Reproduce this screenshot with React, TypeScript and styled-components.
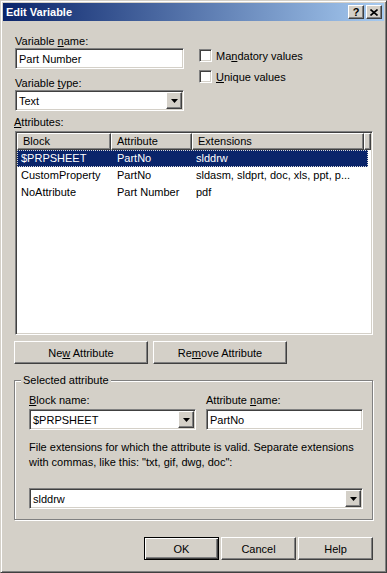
import React from 'react';
import styled, { createGlobalStyle, css } from 'styled-components';

const GlobalStyle = createGlobalStyle`
  html, body {
    margin: 0;
    padding: 0;
    background: #d4d0c8;
  }
  body {
    font-family: "Liberation Sans", Arial, sans-serif;
    font-size: 11px;
    color: #000;
  }
`;

// bevels used by the classic controls
const raised = css`
  background: #d4d0c8;
  border: 1px solid;
  border-color: #fff #404040 #404040 #fff;
  box-shadow: inset -1px -1px 0 #808080;
`;

const sunken = css`
  background: #fff;
  border: 1px solid;
  border-color: #808080 #fff #fff #808080;
  box-shadow: inset 1px 1px 0 #404040, inset -1px -1px 0 #d4d0c8;
`;

const Window = styled.div`
  width: 387px;
  height: 573px;
  box-sizing: border-box;
  background: #d4d0c8;
  border: 1px solid;
  border-color: #d4d0c8 #404040 #404040 #d4d0c8;
  box-shadow: inset 1px 1px 0 #fff, inset -1px -1px 0 #808080;
  padding: 2px;
  display: flex;
  flex-direction: column;
`;

const TitleBar = styled.div`
  height: 18px;
  display: flex;
  align-items: center;
  justify-content: space-between;
  padding: 0 2px 0 2px;
  background: linear-gradient(to right, #0a246a, #a6caf0);
`;

const TitleText = styled.span`
  color: #fff;
  font-weight: bold;
  font-size: 11px;
  padding-left: 1px;
`;

const CaptionButtons = styled.div`
  display: flex;
  gap: 2px;
`;

const CaptionButton = styled.div`
  ${raised};
  width: 16px;
  height: 14px;
  box-sizing: border-box;
  display: flex;
  align-items: center;
  justify-content: center;
  font-weight: bold;
  font-size: 11px;
  line-height: 1;
`;

const Body = styled.div`
  flex: 1;
  display: flex;
  flex-direction: column;
  padding: 14px 11px 0;
`;

const TopRow = styled.div`
  display: flex;
`;

const FieldColumn = styled.div`
  width: 169px;
  padding-left: 1px;
  display: flex;
  flex-direction: column;
`;

const OptionColumn = styled.div`
  margin-left: 15px;
  padding-top: 14px;
  display: flex;
  flex-direction: column;
  gap: 8px;
`;

const Label = styled.div<{ $mt?: number; $mb?: number }>`
  height: 13px;
  line-height: 13px;
  white-space: nowrap;
  margin-top: ${(p) => p.$mt ?? 0}px;
  margin-bottom: ${(p) => p.$mb ?? 0}px;
`;

const TextBox = styled.div`
  ${sunken};
  height: 21px;
  box-sizing: border-box;
  display: flex;
  align-items: center;
  padding: 0 3px;
  white-space: nowrap;
`;

const ComboBox = styled.div`
  ${sunken};
  height: 21px;
  box-sizing: border-box;
  padding: 1px;
  display: flex;
  align-items: stretch;
`;

const ComboText = styled.span`
  flex: 1;
  display: flex;
  align-items: center;
  padding-left: 2px;
  white-space: nowrap;
`;

const DropButton = styled.div`
  ${raised};
  width: 16px;
  box-sizing: border-box;
  display: flex;
  align-items: center;
  justify-content: center;
`;

const CheckRow = styled.div`
  display: flex;
  align-items: center;
  gap: 4px;
  height: 13px;
  white-space: nowrap;
`;

const CheckBox = styled.div`
  ${sunken};
  width: 13px;
  height: 13px;
  box-sizing: border-box;
`;

const ListView = styled.div`
  ${sunken};
  height: 204px;
  box-sizing: border-box;
  margin-left: 1px;
  padding: 1px;
  overflow: hidden;
`;

const HeaderRow = styled.div`
  display: flex;
  height: 17px;
`;

const HeaderCell = styled.div<{ $width?: number }>`
  ${raised};
  box-sizing: border-box;
  ${(p) => (p.$width ? `width: ${p.$width}px;` : 'flex: 1;')}
  padding-left: 5px;
  line-height: 15px;
  white-space: nowrap;
  overflow: hidden;
`;

const Row = styled.div<{ $selected?: boolean }>`
  display: flex;
  width: 351px;
  height: 17px;
  box-sizing: border-box;
  ${(p) =>
    p.$selected &&
    css`
      background: #0a246a;
      color: #fff;
      outline: 1px dotted #d8d8d8;
      outline-offset: -1px;
    `}
`;

const Cell = styled.div<{ $width: number; $pad: number }>`
  width: ${(p) => p.$width}px;
  padding-left: ${(p) => p.$pad}px;
  box-sizing: border-box;
  line-height: 17px;
  white-space: nowrap;
  overflow: hidden;
`;

const ButtonRow = styled.div<{ $end?: boolean; $gap: number; $mt: number }>`
  display: flex;
  justify-content: ${(p) => (p.$end ? 'flex-end' : 'flex-start')};
  gap: ${(p) => p.$gap}px;
  margin-top: ${(p) => p.$mt}px;
`;

const Button = styled.button<{ $width: number; $default?: boolean }>`
  width: ${(p) => p.$width}px;
  height: 23px;
  box-sizing: border-box;
  padding: 0;
  font: inherit;
  color: #000;
  background: #d4d0c8;
  border: 1px solid;
  ${(p) =>
    p.$default
      ? css`
          border-color: #000;
          box-shadow: inset 1px 1px 0 #fff, inset -1px -1px 0 #404040, inset -2px -2px 0 #808080;
        `
      : css`
          border-color: #fff #404040 #404040 #fff;
          box-shadow: inset -1px -1px 0 #808080;
        `}
`;

const GroupBox = styled.fieldset`
  margin: 10px 0 0;
  padding: 0 9px 10px 6px;
  border: 1px solid #808080;
  box-shadow: inset 1px 1px 0 #fff, 1px 1px 0 #fff;
  min-width: 0;
`;

const GroupTitle = styled.legend`
  padding: 0 2px;
  line-height: 13px;
  background: #d4d0c8;
`;

const GroupBody = styled.div`
  padding: 7px 0 0 8px;
  display: flex;
  flex-direction: column;
`;

const FieldPair = styled.div`
  display: flex;
  gap: 10px;
`;

const Field = styled.div<{ $width?: number }>`
  display: flex;
  flex-direction: column;
  ${(p) => (p.$width ? `width: ${p.$width}px;` : 'flex: 1;')}
`;

const Hint = styled.p`
  margin: 10px 0 0;
  line-height: 15px;
  white-space: nowrap;
`;

const Arrow = () => (
  <svg width="7" height="4" viewBox="0 0 7 4">
    <polygon points="0,0 7,0 3.5,4" fill="#000" />
  </svg>
);

const CloseGlyph = () => (
  <svg width="8" height="7" viewBox="0 0 8 7">
    <path d="M0.5 0.5 L7.5 6.5 M7.5 0.5 L0.5 6.5" stroke="#000" strokeWidth="1.6" />
  </svg>
);

const columns = [
  { title: 'Block', width: 95, pad: 4 },
  { title: 'Attribute', width: 82, pad: 5 },
  { title: 'Extensions', width: 174, pad: 2 },
];

const rows = [
  ['$PRPSHEET', 'PartNo', 'slddrw'],
  ['CustomProperty', 'PartNo', 'sldasm, sldprt, doc, xls, ppt, p...'],
  ['NoAttribute', 'Part Number', 'pdf'],
];

const Combo = ({ value }: { value: string }) => (
  <ComboBox>
    <ComboText>{value}</ComboText>
    <DropButton>
      <Arrow />
    </DropButton>
  </ComboBox>
);

export default function App() {
  return (
    <>
      <GlobalStyle />
      <Window>
        <TitleBar>
          <TitleText>Edit Variable</TitleText>
          <CaptionButtons>
            <CaptionButton>?</CaptionButton>
            <CaptionButton>
              <CloseGlyph />
            </CaptionButton>
          </CaptionButtons>
        </TitleBar>

        <Body>
          <TopRow>
            <FieldColumn>
              <Label>
                Variable <u>n</u>ame:
              </Label>
              <TextBox>Part Number</TextBox>
              <Label $mt={8}>
                Variable <u>t</u>ype:
              </Label>
              <Combo value="Text" />
            </FieldColumn>
            <OptionColumn>
              <CheckRow>
                <CheckBox />
                <span>
                  Ma<u>n</u>datory values
                </span>
              </CheckRow>
              <CheckRow>
                <CheckBox />
                <span>
                  <u>U</u>nique values
                </span>
              </CheckRow>
            </OptionColumn>
          </TopRow>

          <Label $mt={5} $mb={2}>
            <u>A</u>ttributes:
          </Label>
          <ListView>
            <HeaderRow>
              {columns.map((c) => (
                <HeaderCell key={c.title} $width={c.width}>
                  {c.title}
                </HeaderCell>
              ))}
              <HeaderCell />
            </HeaderRow>
            {rows.map((r, i) => (
              <Row key={r[0]} $selected={i === 0}>
                {r.map((v, j) => (
                  <Cell key={j} $width={columns[j].width} $pad={columns[j].pad}>
                    {v}
                  </Cell>
                ))}
              </Row>
            ))}
          </ListView>

          <ButtonRow $gap={5} $mt={6}>
            <Button $width={134}>
              Ne<u>w</u> Attribute
            </Button>
            <Button $width={134}>
              Re<u>m</u>ove Attribute
            </Button>
          </ButtonRow>

          <GroupBox>
            <GroupTitle>Selected attribute</GroupTitle>
            <GroupBody>
              <FieldPair>
                <Field $width={167}>
                  <Label $mb={2}>
                    <u>B</u>lock name:
                  </Label>
                  <Combo value="$PRPSHEET" />
                </Field>
                <Field>
                  <Label $mb={2}>
                    Attribute <u>n</u>ame:
                  </Label>
                  <TextBox>PartNo</TextBox>
                </Field>
              </FieldPair>
              <Hint>
                File extensions for which the attribute is valid. Separate extensions
                <br />
                with commas, like this: "txt, gif, dwg, doc":
              </Hint>
              <div style={{ marginTop: 18 }}>
                <Combo value="slddrw" />
              </div>
            </GroupBody>
          </GroupBox>

          <ButtonRow $end $gap={2} $mt={17}>
            <Button $width={75} $default>
              OK
            </Button>
            <Button $width={75}>Cancel</Button>
            <Button $width={75}>Help</Button>
          </ButtonRow>
        </Body>
      </Window>
    </>
  );
}
